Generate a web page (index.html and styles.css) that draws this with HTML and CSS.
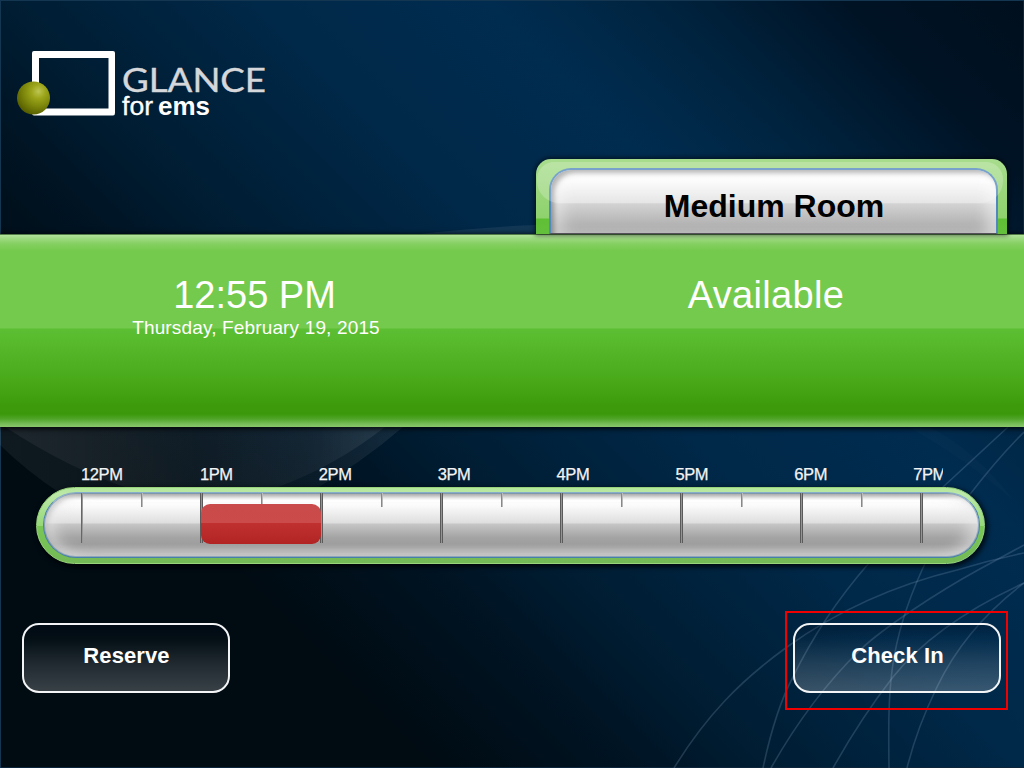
FILE: index.html
```html
<!DOCTYPE html>
<html lang="en">
<head>
<meta charset="utf-8">
<title>Glance for EMS</title>
<link rel="stylesheet" href="styles.css">
</head>
<body>
<div class="screen">
  <svg class="backdrop" viewBox="0 0 1024 768" aria-hidden="true">
    <defs>
      <linearGradient id="glow" x1="0" x2="1" y1="0" y2="0">
        <stop offset="0" stop-color="#fff" stop-opacity=".06"/>
        <stop offset=".5" stop-color="#fff" stop-opacity=".03"/>
        <stop offset=".8" stop-color="#fff" stop-opacity=".04"/>
        <stop offset="1" stop-color="#fff" stop-opacity=".08"/>
      </linearGradient>
    </defs>
    <path fill="url(#glow)" d="M0 427V445Q28 472 57 491Q190 560 312 491Q360 464 403 427Z"/>
    <path fill="url(#glow)" d="M5 427Q70 469 125 487Q200 509 278 487Q335 466 385 427Z"/>
    <path fill="#fff" fill-opacity=".07" d="M420 234Q480 227 536 225V234Z"/>
    <path fill="#fff" fill-opacity=".015" d="M908 427Q965 458 1015 502Q975 450 930 427Z"/>
    <g class="arcs">
      <path d="M674 768C706 716 740 681 787 647Q862 593 957 570Q990 560 1024 553"/>
      <path d="M763 768C770 735 779 703 793 677Q822 617 869 563Q900 524 943 487L1008 427"/>
      <path d="M771 768Q810 699 860 650C883 628 938 592 978 570L1024 545"/>
      <path d="M833 768Q861 718 893 677Q935 624 1024 583"/>
      <path d="M889 768C888 690 888 645 922 570Q939 531 971 493Q998 458 1024 432"/>
      <path d="M907 768Q917 728 937 687Q965 628 1024 583"/>
    </g>
  </svg>

  <header class="top">
    <svg class="logo" width="260" height="80" viewBox="10 45 260 80">
      <defs>
        <radialGradient id="ball" cx=".65" cy=".3" r=".72">
          <stop offset="0" stop-color="#bec552"/>
          <stop offset=".3" stop-color="#9ca51a"/>
          <stop offset=".65" stop-color="#7b850a"/>
          <stop offset="1" stop-color="#586000"/>
        </radialGradient>
      </defs>
      <path fill="#fff" fill-rule="evenodd" d="M34 51H113Q115 51 115 53V113Q115 115.500 113 115.500H34Q32 115.500 32 113V53Q32 51 34 51ZM39 58V108.500H108.500V58Z"/>
      <circle cx="33.500" cy="98" r="16.500" fill="url(#ball)"/>
      <text class="logo-name" x="122" y="91.500" textLength="144" lengthAdjust="spacingAndGlyphs">GLANCE</text>
      <text class="logo-for" x="122" y="115" textLength="31" lengthAdjust="spacingAndGlyphs">for</text>
      <text class="logo-ems" x="158" y="115" textLength="52" lengthAdjust="spacingAndGlyphs">ems</text>
    </svg>
    <div class="tab"><div class="tab-face"><h1 class="room">Medium Room</h1></div></div>
  </header>

  <section class="status">
    <div class="status-cell">
      <div class="time">12:55 PM</div>
      <div class="date">Thursday, February 19, 2015</div>
    </div>
    <div class="status-cell status-right"><div class="time state">Available</div></div>
  </section>

  <section class="schedule">
    <div class="hours">
      <span>12PM</span><span>1PM</span><span>2PM</span><span>3PM</span><span>4PM</span><span>5PM</span><span>6PM</span><span>7PM</span>
    </div>
    <div class="track">
      <div class="track-face">
        <div class="ruler">
          <i></i><i></i><i></i><i></i><i></i><i></i><i></i><i></i>
          <div class="event"></div>
        </div>
      </div>
    </div>
  </section>

  <footer class="actions">
    <button class="btn">Reserve</button>
    <div class="callout"><button class="btn">Check In</button></div>
  </footer>
</div>
</body>
</html>
```
FILE: styles.css
```css
* { box-sizing: border-box; }
body { margin: 0; font-family: "Liberation Sans", Arial, sans-serif; }

.screen {
  position: relative;
  isolation: isolate;
  width: 1024px;
  height: 768px;
  overflow: hidden;
  display: flex;
  flex-direction: column;
  background: linear-gradient(45deg, #000b12 0%, #000b12 24%, #001322 35%, #001d33 43%, #002848 57%, #002c50 70%, #002440 79%, #001325 90%, #000f1d 100%);
  box-shadow: inset 1px 1px 0 #153650, inset -1px -1px 0 #0c253b;
}
.backdrop { position: absolute; inset: 0; z-index: -1; width: 1024px; height: 768px; }
.arcs { fill: none; stroke: #7d9cb9; stroke-opacity: .26; stroke-width: 1.6; }

.top { height: 234px; display: flex; justify-content: space-between; align-items: flex-end; padding: 0 17px 0 10px; }
.logo { align-self: flex-start; margin-top: 45px; }
.logo-name { font: 400 33.500px Lato, sans-serif; fill: #d5d7da; stroke: #d5d7da; stroke-width: .4px; }
.logo-for { font-size: 25px; fill: #fff; stroke: #fff; stroke-width: .3px; }
.logo-ems { font-size: 25px; font-weight: bold; fill: #fff; }

.tab {
  position: relative;
  width: 471px;
  height: 75px;
  padding: 9px 9px 0 13px;
  border-radius: 15px 15px 0 0;
  background: linear-gradient(#a6dc8b 0, #a6dc8b 3px, #8fd26d 59px, #5fbf35 60px, #64c03c 100%);
  box-shadow: 0 0 5px 1px rgba(0, 0, 0, .65);
}
/* glossy highlight across the upper part of the tab */
.tab::after {
  content: "";
  position: absolute;
  left: 1px;
  right: 4px;
  top: 3px;
  height: 41px;
  border-radius: 17px 17px 22px 22px;
  background: rgba(255, 255, 255, .22);
}
.tab-face {
  height: 66px;
  border: 2px solid #5288be;
  border-bottom: 1px solid #55505a;
  border-radius: 22px 22px 0 0;
  background: linear-gradient(#fff 0, #fafafa 12px, #dedede 33px, #d2d2d2 34px, #a6a6a6 100%);
  box-shadow: inset 4px 4px 5px -1px rgba(70, 70, 70, .5), inset -14px 0 14px -4px rgba(255, 255, 255, .45), inset 16px 0 16px -4px rgba(255, 255, 255, .4);
}
.room {
  position: relative;
  z-index: 1;
  margin: 0;
  padding: 17px 0 0 1px;
  font-size: 32px;
  line-height: 38px;
  text-align: center;
  color: #000;
}

.status {
  height: 193px;
  display: grid;
  grid-template-columns: 512px 1fr;
  padding-top: 39px;
  color: #fff;
  text-align: center;
  background: linear-gradient(#527d45 0, #527d45 1px, #b2e29c 1px, #a0da84 4px, #84cf61 10px, #74ca4d 17px, #73ca4d 94px, #5cbe32 95px, #4eb020 133px, #3d9b0b 172px, #3b980b 180px, #50a52a 185px, #77bd58 190px, #8ac66e 193px);
  box-shadow: 0 1px 5px 1px rgba(0, 0, 0, .8);
}
.status-cell:first-child { padding-right: 3px; }
.time { font-size: 38px; line-height: 44px; }
.state { letter-spacing: .35px; padding-right: 4px; }
.date { font-size: 19px; line-height: 22px; letter-spacing: .15px; padding-left: 3px; white-space: nowrap; }

.schedule { padding: 37px 39px 0 36px; }
.hours {
  width: 862px;
  height: 23px;
  margin-left: 45px;
  overflow: hidden;
  display: flex;
  font-size: 16.500px;
  line-height: 21px;
  color: #f4f4f4;
}
.hours span { flex: 0 0 118.900px; letter-spacing: -.4px; -webkit-text-stroke: .25px #f4f4f4; }

.track {
  height: 77px;
  padding: 4px 4px 5px 6px;
  border: 1px solid #98d47b;
  border-radius: 39px;
  background: linear-gradient(#b4e69b, #bde9a8 8%, #96d879 50%, #79c755 51%, #74b956);
  box-shadow: 2px 2px 5px 1px rgba(0, 0, 0, .75);
}
.track-face {
  position: relative;
  height: 66px;
  border: 1px solid #477fab;
  border-top-color: #86aeca;
  border-radius: 33px;
  background: linear-gradient(#b6b6b6 0, #f0f0f0 5px, #fff 7px, #fafafa 13px, #dedede 30px, #c6c6c6 31px, #a3a3a3 45px, #9e9e9e 51px, #c4c4c4 100%);
  box-shadow: inset 0 0 0 1px rgba(71, 127, 171, .45), inset 15px 0 16px -5px rgba(235, 235, 235, .6), inset -15px 0 16px -5px rgba(235, 235, 235, .6), inset 3px 2px 5px rgba(50, 50, 50, .4);
}
.ruler { display: flex; position: relative; width: 880px; margin: 0 0 0 36px; height: 50px; }
.ruler i {
  flex: 0 0 120px;
  background:
    linear-gradient(90deg, #5b5b5b 1px, #949494 1px, #949494 2px, #5b5b5b 2px) 0 0 / 3px 50px no-repeat,
    linear-gradient(90deg, #888 1px, #bbb 1px) 61px 0 / 2px 14px no-repeat;
}
.ruler i:first-child {
  background:
    linear-gradient(90deg, #666 1px, #999 1px) 1px 0 / 2px 50px no-repeat,
    linear-gradient(90deg, #888 1px, #bbb 1px) 61px 0 / 2px 14px no-repeat;
}
.ruler i:nth-last-of-type(1) { flex-basis: 20px; }
.event {
  position: absolute;
  left: 121px;
  top: 11px;
  width: 120px;
  height: 40px;
  border-radius: 9px;
  background: linear-gradient(#ca4b4b 0, #cb4a4a 19px, #c03030 19px, #b22424 100%);
}

.actions { display: flex; justify-content: space-between; align-items: flex-start; padding: 47px 16px 0 22px; }
.actions > .btn { margin-top: 12px; }
.callout { width: 223px; height: 99px; padding: 10px 6px; border: 2px solid #f00000; }
.btn {
  display: block;
  width: 208px;
  height: 70px;
  padding: 0 0 5px 1px;
  border: 2px solid #f2f4f5;
  border-radius: 17px;
  font: bold 22px "Liberation Sans", Arial, sans-serif;
  letter-spacing: .1px;
  color: #fff;
  background: linear-gradient(rgba(0, 10, 30, .25) 0, rgba(255, 255, 255, .01) 20%, rgba(255, 255, 255, .13) 60%, rgba(255, 255, 255, .22) 100%);
}
```
